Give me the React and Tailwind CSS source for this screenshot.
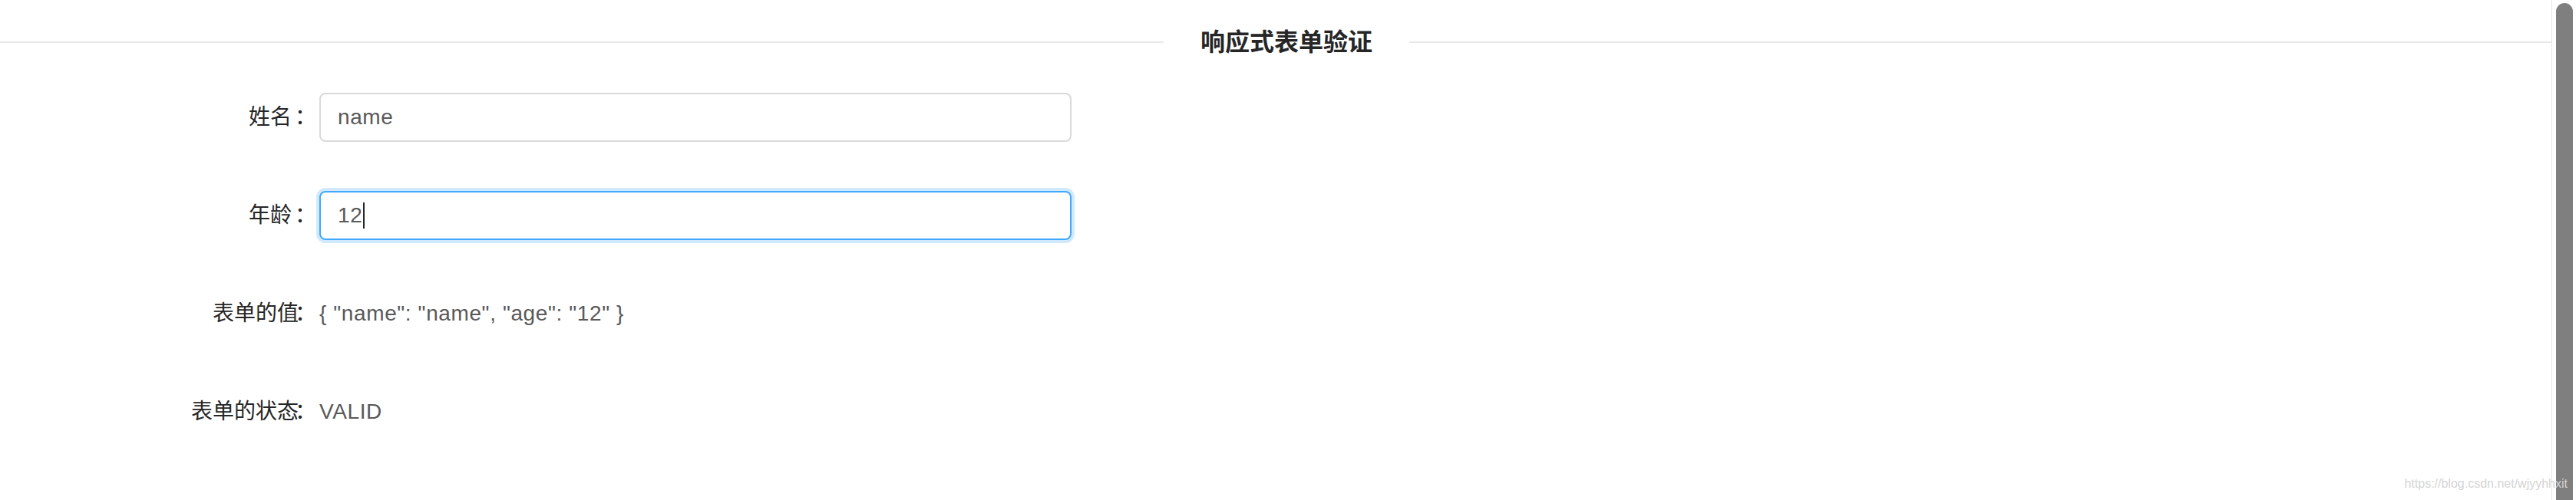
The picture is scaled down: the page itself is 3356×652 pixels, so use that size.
import React from 'react';

const FONT = { fontFamily: '"Liberation Sans", "Noto Sans CJK SC", sans-serif' };

const rows = [
  { label: '姓名', kind: 'input', value: 'name', labelCls: 'w-[380px] mr-[4px]' },
  { label: '年龄', kind: 'focused', value: '12', labelCls: 'w-[380px] mr-[4px]' },
  { label: '表单的值', kind: 'text', value: '{ "name": "name", "age": "12" }', labelCls: 'w-[389px] -mr-[5px]' },
  { label: '表单的状态', kind: 'text', value: 'VALID', labelCls: 'w-[389px] -mr-[5px]' },
];

function Field({ row }) {
  if (row.kind === 'text') {
    return <span className="text-[28px] text-[#595959] tracking-[0.6px]">{row.value}</span>;
  }
  const focused = row.kind === 'focused';
  return (
    <div
      className={`flex h-[64px] w-[980px] items-center rounded-[8px] border-2 bg-white px-[22px] text-[28px] text-[#595959] ${
        focused ? 'border-[#40a9ff] shadow-[0_0_0_4px_rgba(24,144,255,0.2)]' : 'border-[#d9d9d9]'
      }`}
    >
      <span className="tracking-[0.6px]">{row.value}</span>
      {focused && <span className="ml-[1px] h-[34px] w-[2px] bg-[#262626]" />}
    </div>
  );
}

export default function App() {
  return (
    <div className="relative flex h-[652px] w-[3356px] overflow-hidden bg-white" style={FONT}>
      <div className="w-[3324px]">
        {/* divider with title */}
        <div className="mt-[35px] flex h-[40px] items-center">
          <div className="h-[2px] w-[1516px] bg-[#e8e8e8]" />
          <h1 className="px-[48px] text-[32px] font-bold text-[#262626]">响应式表单验证</h1>
          <div className="h-[2px] flex-1 bg-[#e8e8e8]" />
        </div>

        {/* form */}
        <div className="mt-[46px]">
          {rows.map((r) => (
            <div key={r.label} className="mb-[64px] flex h-[64px] items-center">
              <label className={`shrink-0 text-right text-[28px] text-[#262626] ${r.labelCls}`}>{r.label}</label>
              <span className="w-[32px] shrink-0 text-[28px] text-[#262626]">：</span>
              <Field row={r} />
            </div>
          ))}
        </div>
      </div>

      {/* scrollbar */}
      <div className="h-full w-[32px] border-l border-[#e6e6e6] pl-[5px] pt-[4px]">
        <div className="h-[700px] w-[22px] rounded-full bg-[#7f7f7f]" />
      </div>

      <div className="absolute bottom-[9px] right-[11px] z-10 text-[16px] text-[#d4d4d4]">
        https://blog.csdn.net/wjyyhhxit
      </div>
    </div>
  );
}
